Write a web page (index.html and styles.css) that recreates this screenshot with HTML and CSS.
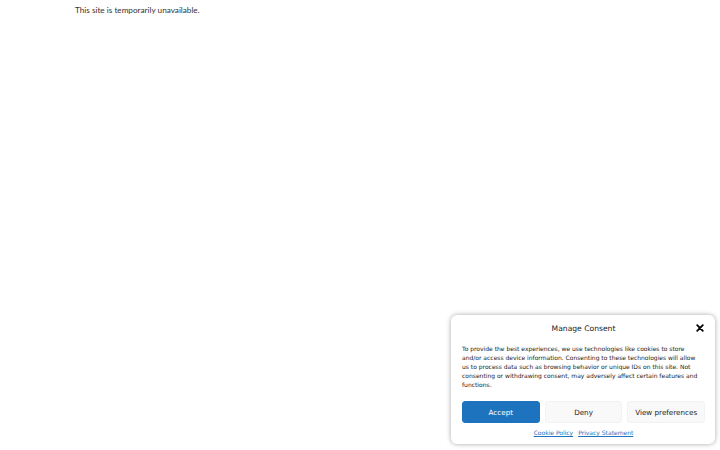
FILE: index.html
```html
<!DOCTYPE html>
<html>
<head>
<meta charset="utf-8">
<link rel="stylesheet" href="styles.css">
</head>
<body>
<p class="notice">This site is temporarily unavailable.</p>
<div class="consent">
  <div class="header">
    <div class="title">Manage Consent</div>
    <button class="close" aria-label="close">
      <svg viewBox="0 0 10 10" width="8" height="8"><path d="M1.5 1.5 L8.5 8.5 M8.5 1.5 L1.5 8.5" stroke="#000" stroke-width="2.2" stroke-linecap="round"/></svg>
    </button>
  </div>
  <div class="message">To provide the best experiences, we use technologies like cookies to store and/or access device information. Consenting to these technologies will allow us to process data such as browsing behavior or unique IDs on this site. Not consenting or withdrawing consent, may adversely affect certain features and functions.</div>
  <div class="buttons">
    <button class="btn accept">Accept</button>
    <button class="btn">Deny</button>
    <button class="btn">View preferences</button>
  </div>
  <div class="links">
    <a href="#">Cookie Policy</a>
    <a href="#">Privacy Statement</a>
  </div>
</div>
</body>
</html>
```
FILE: styles.css
```css
html, body { margin: 0; padding: 0; background: #fff; }
body { width: 720px; height: 450px; position: relative; overflow: hidden; }
.notice {
  margin: 0;
  padding: 5px 0 0 75px;
  font-family: Lato, "Open Sans", sans-serif;
  font-size: 8.2px;
  line-height: 11px;
  color: #333;
}
.consent {
  position: absolute;
  right: 5px;
  bottom: 6px;
  width: 264px;
  box-sizing: border-box;
  padding: 7px 10px 7px 11px;
  background: #fff;
  border-radius: 6px;
  box-shadow: 0 0 5px rgba(0,0,0,0.35);
  font-family: "DejaVu Sans", sans-serif;
  color: #222;
}
.header {
  display: flex;
  align-items: center;
  justify-content: center;
  position: relative;
  height: 12px;
}
.title { font-size: 7.6px; }
.close {
  position: absolute;
  right: 1px;
  top: 2px;
  border: 0;
  padding: 0;
  background: none;
  line-height: 0;
}
.message {
  margin-top: 9.5px;
  padding-right: 5px;
  font-size: 6px;
  line-height: 9px;
}
.buttons {
  display: flex;
  gap: 5px;
  margin-top: 12.5px;
}
.btn {
  flex: 1;
  height: 22px;
  border: 1px solid #f2f2f2;
  border-radius: 3px;
  background: #f9f9f9;
  font-family: "DejaVu Sans", sans-serif;
  font-size: 7.2px;
  color: #222;
  padding: 0;
}
.btn.accept {
  background: #1e73be;
  border-color: #1e73be;
  color: #fff;
}
.links {
  display: flex;
  justify-content: center;
  gap: 5px;
  margin-top: 6px;
  font-size: 6px;
  line-height: 8px;
}
.links a { color: #1e73be; text-decoration: underline; }
```
